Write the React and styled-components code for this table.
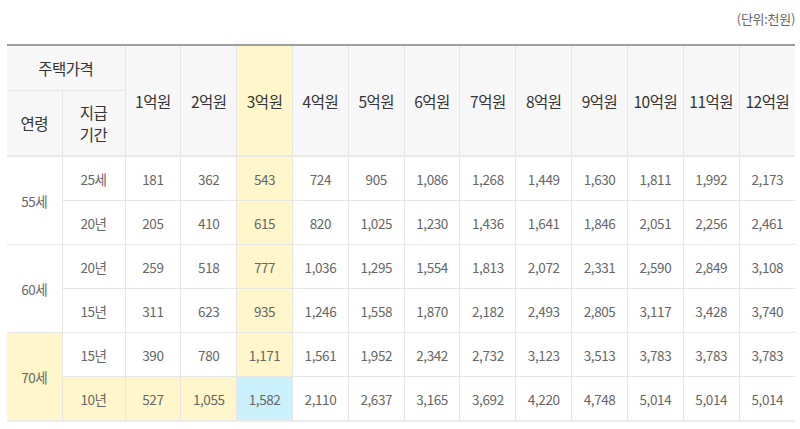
import React from "react"
import styled, { createGlobalStyle } from "styled-components"

const GlobalStyle = createGlobalStyle`
  html, body {
    margin: 0;
    padding: 0;
    background: #fff;
    font-family: "Noto Sans CJK KR", "Noto Sans", sans-serif;
  }
`

const prices = ["1억원", "2억원", "3억원", "4억원", "5억원", "6억원", "7억원", "8억원", "9억원", "10억원", "11억원", "12억원"]

const groups = [
  {
    age: "55세",
    rows: [
      { term: "25세", values: ["181", "362", "543", "724", "905", "1,086", "1,268", "1,449", "1,630", "1,811", "1,992", "2,173"] },
      { term: "20년", values: ["205", "410", "615", "820", "1,025", "1,230", "1,436", "1,641", "1,846", "2,051", "2,256", "2,461"] },
    ],
  },
  {
    age: "60세",
    rows: [
      { term: "20년", values: ["259", "518", "777", "1,036", "1,295", "1,554", "1,813", "2,072", "2,331", "2,590", "2,849", "3,108"] },
      { term: "15년", values: ["311", "623", "935", "1,246", "1,558", "1,870", "2,182", "2,493", "2,805", "3,117", "3,428", "3,740"] },
    ],
  },
  {
    age: "70세",
    mark: true,
    rows: [
      { term: "15년", values: ["390", "780", "1,171", "1,561", "1,952", "2,342", "2,732", "3,123", "3,513", "3,783", "3,783", "3,783"] },
      { term: "10년", mark: true, values: ["527", "1,055", "1,582", "2,110", "2,637", "3,165", "3,692", "4,220", "4,748", "5,014", "5,014", "5,014"] },
    ],
  },
]

const HIGHLIGHT_COL = 2

const Wrap = styled.div`
  padding: 0 5px 0 7px;
  width: 788px;
`

const Unit = styled.p`
  margin: 0;
  height: 44px;
  padding-top: 9px;
  box-sizing: border-box;
  text-align: right;
  font-size: 13px;
  color: #666;
  letter-spacing: -0.3px;
`

const Table = styled.table`
  width: 788px;
  table-layout: fixed;
  border-collapse: collapse;
  border-top: 2px solid #9e9e9e;
  border-bottom: 2px solid #ececec;
`

const Th = styled.th`
  background: ${p => (p.$mark ? "#fff7cb" : "#f7f7f7")};
  color: #333;
  font-weight: 400;
  font-size: 15.5px;
  letter-spacing: -0.5px;
  line-height: 22px;
  padding: 0;
  height: ${p => p.$h || 43}px;
  border: 1px solid #e6e6e6;
  border-top: 0;
  white-space: nowrap;
  &:first-child { border-left: 0; }
  &:last-child { border-right: 0; }
`

const Thead = styled.thead`
  tr:last-child th { border-bottom: 2px solid #e8e8e8; }
  tr:first-child th[rowspan] { border-bottom: 2px solid #e8e8e8; }
`

const Td = styled.td`
  background: ${p => (p.$tone === "blue" ? "#c9f0fb" : p.$tone === "yellow" ? "#fff7cb" : "#fff")};
  color: #666;
  font-size: 13.5px;
  letter-spacing: -0.4px;
  text-align: center;
  padding: 0;
  height: 43px;
  border: 1px solid #e6e6e6;
  &:last-child { border-right: 0; }
`

const AgeTd = styled(Td)`
  border-left: 0;
`

const App = () => (
  <Wrap>
    <GlobalStyle />
    <Unit>(단위:천원)</Unit>
    <Table>
      <colgroup>
        <col style={{ width: 55 }} />
        <col style={{ width: 63 }} />
        {prices.map(p => (
          <col key={p} />
        ))}
      </colgroup>
      <Thead>
        <tr>
          <Th colSpan={2} $h={44}>주택가격</Th>
          {prices.map((p, i) => (
            <Th key={p} rowSpan={2} $mark={i === HIGHLIGHT_COL}>
              {p}
            </Th>
          ))}
        </tr>
        <tr>
          <Th $h={64}>연령</Th>
          <Th $h={64}>
            지급
            <br />
            기간
          </Th>
        </tr>
      </Thead>
      <tbody>
        {groups.map(g =>
          g.rows.map((r, ri) => (
            <tr key={g.age + ri}>
              {ri === 0 && (
                <AgeTd rowSpan={g.rows.length} $tone={g.mark ? "yellow" : undefined}>
                  {g.age}
                </AgeTd>
              )}
              <Td $tone={r.mark ? "yellow" : undefined}>{r.term}</Td>
              {r.values.map((v, i) => {
                let tone
                if (r.mark && i === HIGHLIGHT_COL) tone = "blue"
                else if (i === HIGHLIGHT_COL || (r.mark && i < HIGHLIGHT_COL)) tone = "yellow"
                return (
                  <Td key={i} $tone={tone}>
                    {v}
                  </Td>
                )
              })}
            </tr>
          ))
        )}
      </tbody>
    </Table>
  </Wrap>
)

export default App
